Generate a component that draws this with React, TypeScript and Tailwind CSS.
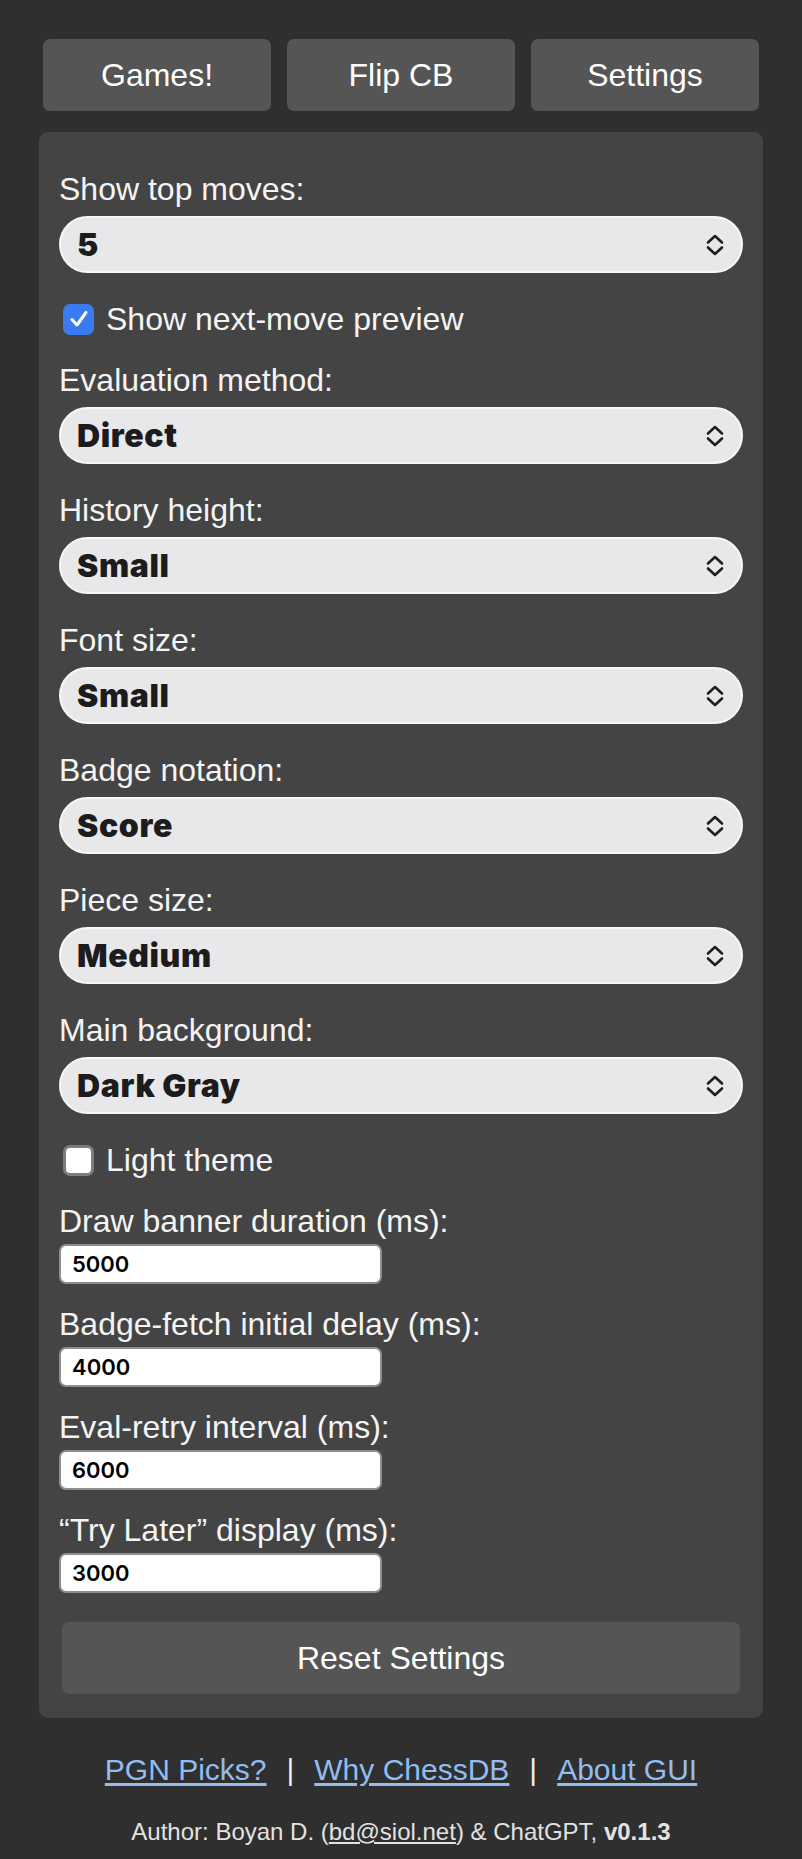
import React from 'react'

const sans = { fontFamily: '"Liberation Sans", Arial, sans-serif' }

const Chevrons = () => (
  <svg width="20" height="24" viewBox="0 0 20 24" fill="none" stroke="#1f1f1f" strokeWidth="2.6" strokeLinecap="round" strokeLinejoin="round">
    <path d="M3 9.5 L10 3 L17 9.5" />
    <path d="M3 14.5 L10 21 L17 14.5" />
  </svg>
)

const Select: React.FC<{ value: string }> = ({ value }) => (
  <div className="mt-[9px] h-[57px] rounded-full bg-[#e8e8ea] border-2 border-[#f7f7f7] flex items-center justify-between pl-[16px] pr-[16px]">
    <span className="text-[32px] font-black text-[#1c1c1e] tracking-[0.6px]" style={{ fontFamily: 'Inter, "Liberation Sans", sans-serif' }}>
      {value}
    </span>
    <Chevrons />
  </div>
)

const Label: React.FC<{ children: React.ReactNode; className?: string }> = ({ children, className }) => (
  <div className={`text-[32px] leading-[36px] text-[#f4f4f4] ${className ?? ''}`}>{children}</div>
)

const Checkbox: React.FC<{ checked: boolean; label: string }> = ({ checked, label }) => (
  <div className="mt-[28px] h-[36px] flex items-center">
    {checked ? (
      <span className="ml-[4px] w-[31px] h-[31px] rounded-[7px] bg-[#3a7bf2] flex items-center justify-center">
        <svg width="22" height="22" viewBox="0 0 22 22" fill="none" stroke="#fff" strokeWidth="3" strokeLinecap="round" strokeLinejoin="round">
          <path d="M4 11.5 L9 17 L18 4.5" />
        </svg>
      </span>
    ) : (
      <span className="ml-[4px] w-[31px] h-[31px] rounded-[7px] bg-white border-[3px] border-[#7d7d7d]" />
    )}
    <span className="ml-[12px] text-[32px] leading-[36px] text-[#f4f4f4]">{label}</span>
  </div>
)

const NumberField: React.FC<{ label: string; value: string; first?: boolean }> = ({ label, value, first }) => (
  <>
    <Label className={first ? 'mt-[25px]' : 'mt-[22px]'}>{label}</Label>
    <div className="mt-[5px] w-[323px] h-[40px] rounded-[7px] bg-white border-2 border-[#8e8e8e] flex items-center pl-[11px]">
      <span className="text-[22px] font-semibold text-black" style={{ fontFamily: 'Inter, "Liberation Sans", sans-serif' }}>
        {value}
      </span>
    </div>
  </>
)

export default function App() {
  return (
    <div className="min-h-[1859px] bg-[#2f2f2f] pt-[39px]" style={sans}>
      <div className="w-[724px] mx-auto">
        {/* Top buttons */}
        <div className="grid grid-cols-3 gap-[16px] px-[4px]">
          {['Games!', 'Flip CB', 'Settings'].map((t) => (
            <button key={t} className="h-[72px] rounded-[7px] bg-[#555555] text-[32px] text-white">
              {t}
            </button>
          ))}
        </div>

        {/* Settings panel */}
        <div className="mt-[21px] bg-[#444444] rounded-[9px] pt-[39px] px-[20px] pb-[24px]">
          <Label>Show top moves:</Label>
          <Select value="5" />

          <Checkbox checked label="Show next-move preview" />

          <Label className="mt-[25px]">Evaluation method:</Label>
          <Select value="Direct" />

          <Label className="mt-[28px]">History height:</Label>
          <Select value="Small" />

          <Label className="mt-[28px]">Font size:</Label>
          <Select value="Small" />

          <Label className="mt-[28px]">Badge notation:</Label>
          <Select value="Score" />

          <Label className="mt-[28px]">Piece size:</Label>
          <Select value="Medium" />

          <Label className="mt-[28px]">Main background:</Label>
          <Select value="Dark Gray" />

          <Checkbox checked={false} label="Light theme" />

          <NumberField first label="Draw banner duration (ms):" value="5000" />
          <NumberField label="Badge-fetch initial delay (ms):" value="4000" />
          <NumberField label="Eval-retry interval (ms):" value="6000" />
          <NumberField label="“Try Later” display (ms):" value="3000" />

          <button className="mt-[29px] mx-[3px] w-[calc(100%-6px)] h-[72px] rounded-[7px] bg-[#555555] text-[32px] text-white">
            Reset Settings
          </button>
        </div>

        {/* Footer links */}
        <div className="mt-[35px] flex justify-center items-center text-[30px] leading-[34px]">
          <a href="#" className="text-[#93bdf0] underline underline-offset-[3px]">PGN Picks?</a>
          <span className="mx-[20px] text-[#eeeeee]">|</span>
          <a href="#" className="text-[#93bdf0] underline underline-offset-[3px]">Why ChessDB</a>
          <span className="mx-[20px] text-[#eeeeee]">|</span>
          <a href="#" className="text-[#93bdf0] underline underline-offset-[3px]">About GUI</a>
        </div>

        <div className="mt-[31px] text-center text-[24px] leading-[28px] text-[#e2e2e2]">
          Author: Boyan D. (<a href="#" className="underline underline-offset-[2px]">bd@siol.net</a>) &amp; ChatGPT, <b>v0.1.3</b>
        </div>
      </div>
    </div>
  )
}
